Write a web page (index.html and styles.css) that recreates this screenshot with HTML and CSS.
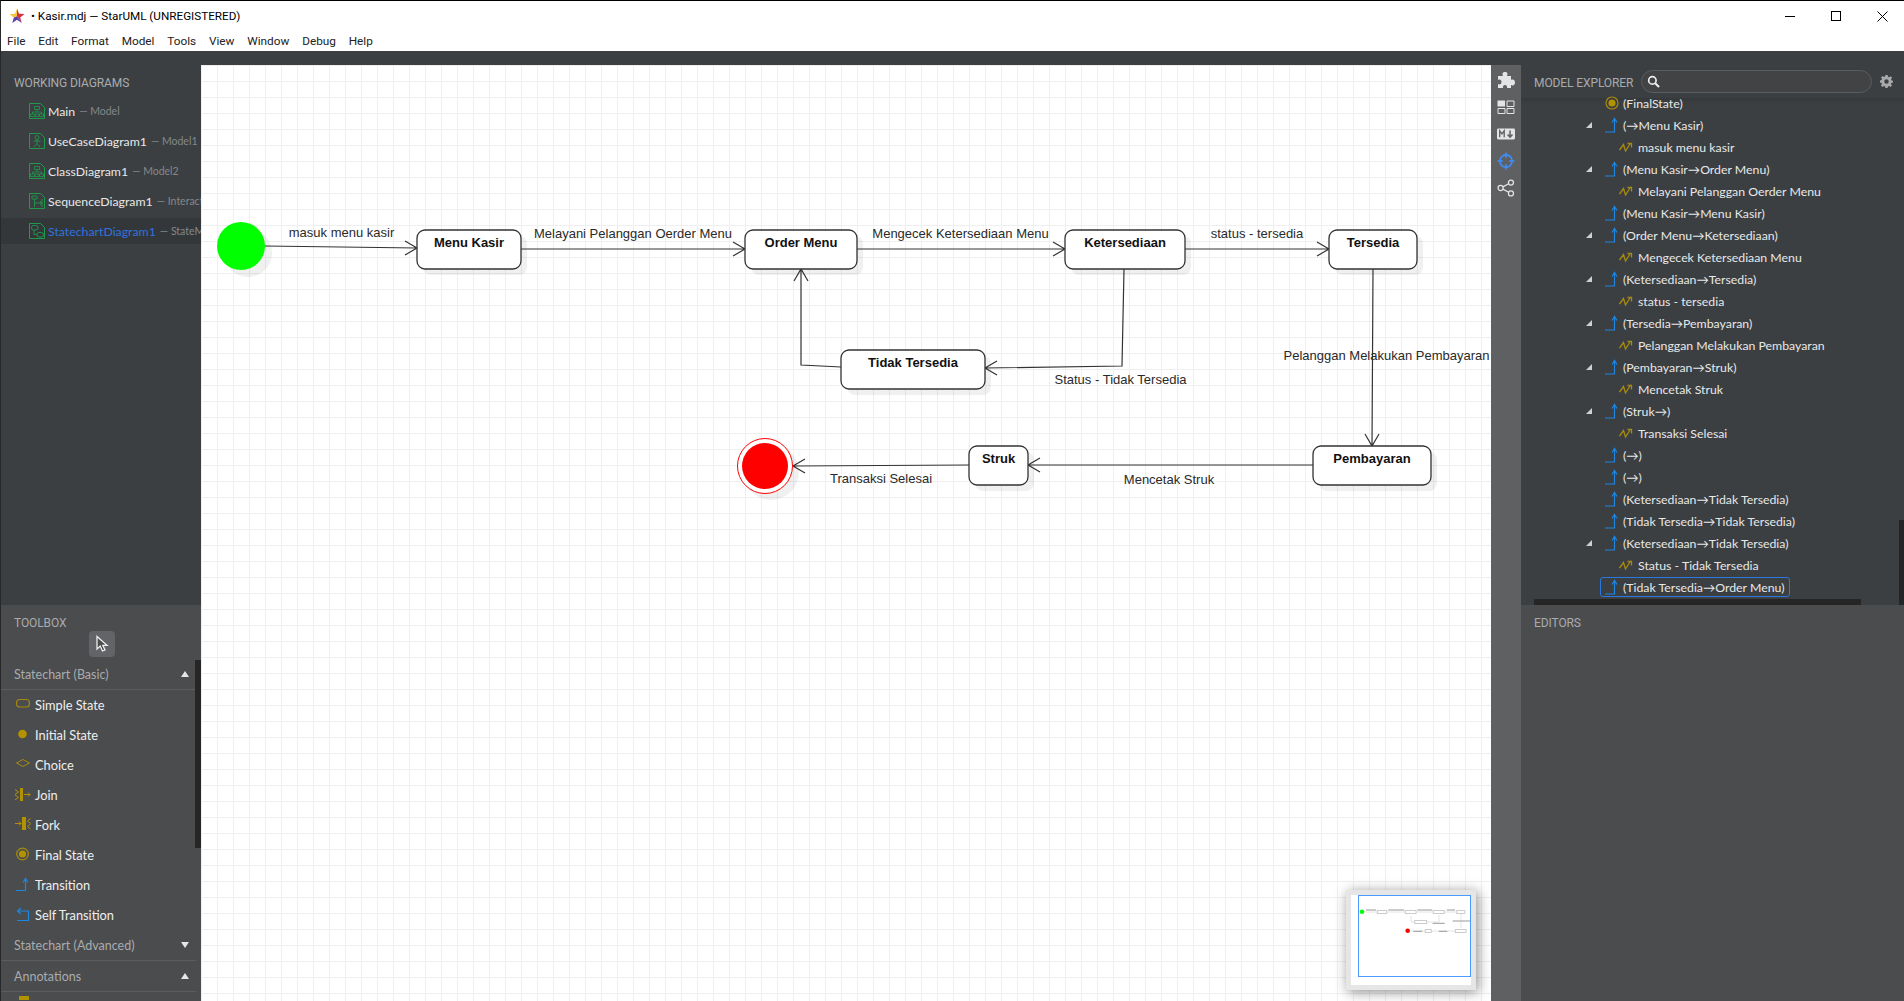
FILE: index.html
```html
<!DOCTYPE html>
<html lang="en">
<head>
<meta charset="utf-8">
<title>Kasir.mdj — StarUML (UNREGISTERED)</title>
<link rel="stylesheet" href="styles.css">
</head>
<body>
<svg class="sprite" aria-hidden="true">
  <symbol id="i-trans" viewBox="0 0 14 16"><path d="M0 15H9.500V2M7 5.500 9.500 1.500 12 5.500" fill="none" stroke="#1c86e0" stroke-width="1.200"/></symbol>
  <symbol id="i-event" viewBox="0 0 14 12"><path d="M.5 9 4.500 3.500 6.500 10 11 3M8.500 2.500H12.500V6.500" fill="none" stroke="#a88a0e" stroke-width="1.300"/></symbol>
  <symbol id="i-final" viewBox="0 0 14 14"><circle cx="7" cy="7" r="6" fill="none" stroke="#a88a0e" stroke-width="1.200"/><circle cx="7" cy="7" r="3.600" fill="#b39200"/></symbol>
  <symbol id="i-page-class" viewBox="0 0 16 16"><path d="M.5.500H11.500L15.500 4.500V15.500H.5Z" fill="none" stroke="#1e9a4c"/><path d="M5.500 3.500H10.500V6.500H5.500ZM8 6.500V9M3.500 11V9H12.500V11M1.500 11H5.500V13.500H1.500ZM6 11H10V13.500H6ZM10.500 11H14.500V13.500H10.500Z" fill="none" stroke="#1e9a4c" stroke-width=".8"/></symbol>
  <symbol id="i-page-usecase" viewBox="0 0 16 16"><path d="M.5.500H11.500L15.500 4.500V15.500H.5Z" fill="none" stroke="#1e9a4c"/><circle cx="8" cy="4.500" r="2" fill="none" stroke="#1e9a4c" stroke-width=".9"/><path d="M8 6.500V10.500M4.500 8H11.500M5 14 8 10.500 11 14" fill="none" stroke="#1e9a4c" stroke-width=".9"/></symbol>
  <symbol id="i-page-seq" viewBox="0 0 16 16"><path d="M.5.500H11.500L15.500 4.500V15.500H.5Z" fill="none" stroke="#1e9a4c"/><path d="M3 3H8V6H3ZM5.500 6V14M5.500 10H13M11 8 13 10 11 12M13 6V14" fill="none" stroke="#1e9a4c" stroke-width=".9"/></symbol>
  <symbol id="i-page-state" viewBox="0 0 16 16"><path d="M.5.500H11.500L15.500 4.500V15.500H.5Z" fill="none" stroke="#1e9a4c"/><rect x="2.500" y="2.500" width="6.500" height="4.500" rx="2" fill="none" stroke="#1e9a4c" stroke-width=".9"/><rect x="8" y="9.500" width="6.500" height="4.500" rx="2" fill="none" stroke="#1e9a4c" stroke-width=".9"/><path d="M5 7V11.500H8" fill="none" stroke="#1e9a4c" stroke-width=".9"/></symbol>
</svg>

<div class="app">
  <header class="titlebar">
    <svg class="app-logo" viewBox="0 0 16 16"><path d="M8 .5 10 5.800 15.500 6 11.200 9.400 12.700 15 8 8Z" fill="#d9303f"/><path d="M8 8 12.700 15 8 11.800 3.300 15 4.800 9.400Z" fill="#5b3fa8"/><path d="M.5 6 6 5.800 8 .5V8L4.800 9.400Z" fill="#f4c63a"/></svg>
    <span class="title-text">• Kasir.mdj — StarUML (UNREGISTERED)</span>
    <div class="win-controls">
      <svg viewBox="0 0 11 11"><path d="M0 5.500H10" stroke="#000"/></svg>
      <svg viewBox="0 0 11 11"><rect x=".5" y=".5" width="9" height="9" fill="none" stroke="#000"/></svg>
      <svg viewBox="0 0 11 11"><path d="M.5.500 10.500 10.500M10.500.500 .5 10.500" stroke="#000" fill="none"/></svg>
    </div>
  </header>
  <nav class="menubar">
    <span>File</span><span>Edit</span><span>Format</span><span>Model</span><span>Tools</span><span>View</span><span>Window</span><span>Debug</span><span>Help</span>
  </nav>

  <main class="workspace">
    <aside class="sidebar">
      <section class="working">
        <h2 class="panel-title">WORKING DIAGRAMS</h2>
        <ul class="diagram-list">
          <li class="diagram"><svg class="diagram-icon"><use href="#i-page-class"/></svg><b>Main</b><i>— Model</i></li>
          <li class="diagram"><svg class="diagram-icon"><use href="#i-page-usecase"/></svg><b>UseCaseDiagram1</b><i>— Model1</i></li>
          <li class="diagram"><svg class="diagram-icon"><use href="#i-page-class"/></svg><b>ClassDiagram1</b><i>— Model2</i></li>
          <li class="diagram"><svg class="diagram-icon"><use href="#i-page-seq"/></svg><b>SequenceDiagram1</b><i>— Interaction1</i></li>
          <li class="diagram active"><svg class="diagram-icon"><use href="#i-page-state"/></svg><b>StatechartDiagram1</b><i>— StateMachine1</i></li>
        </ul>
      </section>
      <section class="toolbox">
        <h2 class="panel-title">TOOLBOX</h2>
        <div class="cursor-row">
          <button class="cursor-btn" type="button"><svg viewBox="0 0 16 18"><path d="M3 1.500V14L6.200 11 8.500 16 11 15 8.800 10.300H13Z" fill="#4b4c4e" stroke="#eee" stroke-width="1.300"/></svg></button>
        </div>
        <div class="tool-group">Statechart (Basic)<span class="tri up"></span></div>
        <ul class="tools">
          <li><svg viewBox="0 0 14 16"><rect x=".6" y="4.500" width="12.800" height="7.500" rx="3" fill="none" stroke="#a88a0e" stroke-width="1.100"/></svg>Simple State</li>
          <li><svg viewBox="0 0 14 16"><circle cx="6.500" cy="9" r="4.300" fill="#b39200"/></svg>Initial State</li>
          <li><svg viewBox="0 0 14 16"><path d="M.5 8 7 4.500 13.500 8 7 11.500Z" fill="none" stroke="#a88a0e"/></svg>Choice</li>
          <li><svg viewBox="0 0 14 16"><path d="M4 3H7V16H4Z" fill="#b39200"/><path d="M-1 4.500 2.500 7-1 9.500M-1 10 2.500 12.500-1 15M8 9.500H14M12 7.500 14 9.500 12 11.500" fill="none" stroke="#b39200"/></svg>Join</li>
          <li><svg viewBox="0 0 14 16"><path d="M6 2H10V15H6Z" fill="#b39200"/><path d="M-1 8.500H5M3 6.500 5 8.500 3 10.500M14.500 3.500 11.500 6 14.500 8.500M14.500 9 11.500 11.500 14.500 14" fill="none" stroke="#b39200"/></svg>Fork</li>
          <li><svg viewBox="0 0 14 16"><circle cx="6.500" cy="9" r="5.800" fill="none" stroke="#a88a0e" stroke-width="1.200"/><circle cx="6.500" cy="9" r="3.600" fill="#b39200"/></svg>Final State</li>
          <li><svg viewBox="0 0 14 16"><path d="M0 15.500H9.500V4M7 7.500 9.500 3.500 12 7.500" fill="none" stroke="#1c86e0" stroke-width="1.200"/></svg>Transition</li>
          <li><svg viewBox="0 0 14 16"><path d="M1 15.500H12.500V6H2M5 3 1.500 6 5 9" fill="none" stroke="#1c86e0" stroke-width="1.200"/></svg>Self Transition</li>
        </ul>
        <div class="tool-group">Statechart (Advanced)<span class="tri down"></span></div>
        <div class="tool-group">Annotations<span class="tri up"></span></div>
        <div class="tool-peek"></div>
        <div class="toolbox-scroll"></div>
      </section>
    </aside>

    <div class="center">
      <div class="canvas">
        <svg class="diagram-svg" viewBox="201 65 1290 935">
          <g class="shadow">
            <circle cx="248" cy="253" r="24"/>
            <rect x="423" y="236" width="104" height="39" rx="8"/>
            <rect x="751" y="236" width="112" height="39" rx="8"/>
            <rect x="1071" y="236" width="120" height="39" rx="8"/>
            <rect x="1335" y="236" width="88" height="39" rx="8"/>
            <rect x="847" y="356" width="144" height="39" rx="8"/>
            <rect x="975" y="452" width="59" height="39" rx="8"/>
            <rect x="1319" y="452" width="118" height="39" rx="8"/>
            <circle cx="771" cy="472" r="28"/>
          </g>
          <g class="edges">
            <path d="M265 246 417 248M405 241 417 248 405 255"/>
            <path d="M521 249H745M733 242 745 249 733 256"/>
            <path d="M857 249H1065M1053 242 1065 249 1053 256"/>
            <path d="M1185 249H1329M1317 242 1329 249 1317 256"/>
            <path d="M1373 269 1372 446M1365 434 1372 446 1379 434"/>
            <path d="M1313 465H1028M1040 458 1028 465 1040 472"/>
            <path d="M969 465 793 466M805 459 793 466 805 473"/>
            <path d="M1124 269 1122 366 985 368M997 361 985 368 997 375"/>
            <path d="M841 367 801 365V269M794 281 801 269 808 281"/>
          </g>
          <g class="nodes">
            <rect x="417" y="230" width="104" height="39" rx="8"/>
            <rect x="745" y="230" width="112" height="39" rx="8"/>
            <rect x="1065" y="230" width="120" height="39" rx="8"/>
            <rect x="1329" y="230" width="88" height="39" rx="8"/>
            <rect x="841" y="350" width="144" height="39" rx="8"/>
            <rect x="969" y="446" width="59" height="39" rx="8"/>
            <rect x="1313" y="446" width="118" height="39" rx="8"/>
          </g>
          <circle class="initial" cx="241" cy="246" r="24"/>
          <circle class="final-ring" cx="765" cy="466" r="27.500"/>
          <circle class="final-dot" cx="765" cy="466" r="23"/>
          <g class="node-text">
            <text x="469" y="247">Menu Kasir</text>
            <text x="801" y="247">Order Menu</text>
            <text x="1125" y="247">Ketersediaan</text>
            <text x="1373" y="247">Tersedia</text>
            <text x="913" y="367">Tidak Tersedia</text>
            <text x="998.500" y="463">Struk</text>
            <text x="1372" y="463">Pembayaran</text>
          </g>
          <g class="edge-text">
            <text x="341.500" y="236.500">masuk menu kasir</text>
            <text x="633" y="237.500">Melayani Pelanggan Oerder Menu</text>
            <text x="960.500" y="237.500">Mengecek Ketersediaan Menu</text>
            <text x="1257" y="237.500">status - tersedia</text>
            <text x="1386.500" y="360">Pelanggan Melakukan Pembayaran</text>
            <text x="1120.500" y="384">Status - Tidak Tersedia</text>
            <text x="881" y="483">Transaksi Selesai</text>
            <text x="1169" y="484">Mencetak Struk</text>
          </g>
        </svg>
        <div class="minimap">
          <svg viewBox="0 0 120 90">
            <g class="mini-soft">
              <path class="mini-lines" d="M13 17H105M60 21V27H64M88 20V27H76M110 19V33M60 36H104"/>
              <path class="mini-labels" d="M15 15H25M37.300 15H53.300M66.300 15H81.300M95.700 15H104M101.700 26H119M81.700 28.300H93.700M62.300 36.300H71.300M87.700 36.300H96.300"/>
              <g class="mini-nodes">
                <rect x="26.300" y="15.500" width="9.400" height="3"/><rect x="54.300" y="15.500" width="10.700" height="3"/><rect x="82.300" y="15.500" width="11" height="3"/><rect x="105.700" y="15.500" width="8" height="3"/><rect x="63.700" y="25.500" width="12" height="3"/><rect x="74.300" y="34.500" width="6" height="3"/><rect x="104.300" y="34.500" width="10.700" height="3"/>
              </g>
              <circle class="mini-start" cx="11" cy="16.700" r="2.300"/>
              <circle class="mini-end" cx="56.700" cy="35.700" r="2.300"/>
            </g>
            <rect class="mini-view" x="7.500" y=".5" width="112" height="81"/>
          </svg>
        </div>
      </div>
    </div>

    <div class="toolstrip">
      <svg viewBox="0 0 18 18"><path d="M1 5H6C5 3 5.500 1 8 1S11 3 10 5H14V9C16 8 18 9 18 11.500S16 15 14 14V17H10C10.500 15.500 9.500 14 8 14S5.500 15.500 6 17H1V13C3 14 4.500 13 4.500 11S3 8 1 9Z" fill="#e4e4e4"/></svg>
      <svg viewBox="0 0 18 18"><path d="M.5 2.500H8V8.500H.5Z" fill="#e4e4e4"/><path d="M10 3H17V8.500H10ZM1 10.500H8V15.500H1ZM10 10.500H17V15.500H10Z" fill="none" stroke="#e4e4e4"/></svg>
      <svg viewBox="0 0 20 14"><rect width="20" height="12" y="1" rx="1.500" fill="#e4e4e4"/><path d="M3 10.500V3.500L5.500 6.800 8 3.500V10.500" fill="none" stroke="#5f6062" stroke-width="1.500"/><path d="M14.500 3V10M11.800 7.500 14.500 10.500 17.200 7.500" fill="none" stroke="#5f6062" stroke-width="1.700"/></svg>
      <svg viewBox="0 0 20 20"><circle cx="10" cy="10" r="6.800" fill="none" stroke="#3e8ef7" stroke-width="1.800"/><path d="M10 .5V6.500M10 13.500V19.500M.5 10H6.500M13.500 10H19.500" stroke="#3e8ef7" stroke-width="1.800"/></svg>
      <svg viewBox="0 0 20 20"><circle cx="15.500" cy="4" r="2.800" fill="none" stroke="#e4e4e4" stroke-width="1.400"/><circle cx="15.500" cy="16" r="2.800" fill="none" stroke="#e4e4e4" stroke-width="1.400"/><circle cx="4" cy="10" r="2.800" fill="none" stroke="#e4e4e4" stroke-width="1.400"/><path d="M6.500 8.700 13 5.300M6.500 11.300 13 14.700" stroke="#e4e4e4" stroke-width="1.400"/></svg>
    </div>

    <aside class="right">
      <section class="explorer">
        <div class="explorer-head">
          <h2 class="panel-title">MODEL EXPLORER</h2>
          <div class="search"><svg viewBox="0 0 14 14"><circle cx="5.800" cy="5.800" r="4" fill="none" stroke="#eee" stroke-width="1.800"/><path d="M8.800 8.800 13 13" stroke="#eee" stroke-width="2.200"/></svg></div>
          <svg class="gear" viewBox="0 0 14 14"><path d="M5.800 0H8.200L8.600 1.900 9.900 2.400 11.500 1.300 13 3 11.900 4.500 12.400 5.800 14 6.100V8.200L12.300 8.500 11.800 9.800 12.900 11.400 11.300 13 9.800 11.900 8.500 12.400 8.200 14H5.800L5.500 12.300 4.200 11.800 2.600 12.900 1 11.300 2.100 9.800 1.600 8.500 0 8.200V5.800L1.700 5.500 2.200 4.200 1.100 2.600 2.700 1 4.200 2.100 5.500 1.600ZM7 4.600A2.400 2.400 0 1 0 7 9.400 2.400 2.400 0 1 0 7 4.600Z" fill="#a9a9a9" fill-rule="evenodd"/></svg>
        </div>
        <ul class="tree">
          <li class="row"><svg class="n-icon final"><use href="#i-final"/></svg>(FinalState)</li>
          <li class="row open"><svg class="n-icon"><use href="#i-trans"/></svg>(→Menu Kasir)</li>
          <li class="row child"><svg class="n-icon"><use href="#i-event"/></svg>masuk menu kasir</li>
          <li class="row open"><svg class="n-icon"><use href="#i-trans"/></svg>(Menu Kasir→Order Menu)</li>
          <li class="row child"><svg class="n-icon"><use href="#i-event"/></svg>Melayani Pelanggan Oerder Menu</li>
          <li class="row"><svg class="n-icon"><use href="#i-trans"/></svg>(Menu Kasir→Menu Kasir)</li>
          <li class="row open"><svg class="n-icon"><use href="#i-trans"/></svg>(Order Menu→Ketersediaan)</li>
          <li class="row child"><svg class="n-icon"><use href="#i-event"/></svg>Mengecek Ketersediaan Menu</li>
          <li class="row open"><svg class="n-icon"><use href="#i-trans"/></svg>(Ketersediaan→Tersedia)</li>
          <li class="row child"><svg class="n-icon"><use href="#i-event"/></svg>status - tersedia</li>
          <li class="row open"><svg class="n-icon"><use href="#i-trans"/></svg>(Tersedia→Pembayaran)</li>
          <li class="row child"><svg class="n-icon"><use href="#i-event"/></svg>Pelanggan Melakukan Pembayaran</li>
          <li class="row open"><svg class="n-icon"><use href="#i-trans"/></svg>(Pembayaran→Struk)</li>
          <li class="row child"><svg class="n-icon"><use href="#i-event"/></svg>Mencetak Struk</li>
          <li class="row open"><svg class="n-icon"><use href="#i-trans"/></svg>(Struk→)</li>
          <li class="row child"><svg class="n-icon"><use href="#i-event"/></svg>Transaksi Selesai</li>
          <li class="row"><svg class="n-icon"><use href="#i-trans"/></svg>(→)</li>
          <li class="row"><svg class="n-icon"><use href="#i-trans"/></svg>(→)</li>
          <li class="row"><svg class="n-icon"><use href="#i-trans"/></svg>(Ketersediaan→Tidak Tersedia)</li>
          <li class="row"><svg class="n-icon"><use href="#i-trans"/></svg>(Tidak Tersedia→Tidak Tersedia)</li>
          <li class="row open"><svg class="n-icon"><use href="#i-trans"/></svg>(Ketersediaan→Tidak Tersedia)</li>
          <li class="row child"><svg class="n-icon"><use href="#i-event"/></svg>Status - Tidak Tersedia</li>
          <li class="row"><span class="selected"><svg class="n-icon"><use href="#i-trans"/></svg>(Tidak Tersedia→Order Menu)</span></li>
        </ul>
        <div class="h-scroll"></div>
        <div class="v-scroll"></div>
      </section>
      <section class="editors">
        <h2 class="panel-title">EDITORS</h2>
      </section>
    </aside>
  </main>
</div>
</body>
</html>
```
FILE: styles.css
```css
* { box-sizing: border-box; }
html, body { margin: 0; height: 100%; overflow: hidden; }
body { font-family: Lato, "Noto Sans", sans-serif; background: #3b3f42; }
ul { list-style: none; margin: 0; padding: 0; }
.sprite { position: absolute; width: 0; height: 0; }

.app { height: 1001px; display: flex; flex-direction: column; border-top: 1px solid #000; border-left: 1px solid #26282a; }

.titlebar { height: 30px; flex: none; background: #fff; display: flex; align-items: center; font-family: Roboto, sans-serif; font-size: 11.700px; color: #000; padding-left: 8px; }
.app-logo { width: 16px; height: 16px; margin-right: 6px; }
.win-controls { margin-left: auto; display: flex; align-items: center; padding-right: 16px; gap: 35px; }
.win-controls svg { width: 11px; height: 11px; }

.menubar { height: 20px; flex: none; background: #fff; display: flex; align-items: center; font-family: Roboto, sans-serif; font-size: 11.800px; color: #222; padding-left: 6px; gap: 12.800px; }

.workspace { flex: 1; min-height: 0; display: flex; }

.sidebar { width: 200px; flex: none; display: flex; flex-direction: column; }
.panel-title { margin: 0; font-family: Roboto, sans-serif; font-size: 12px; letter-spacing: -.1px; font-weight: 400; color: #a9abad; line-height: 16px; white-space: nowrap; flex: none; }

.working { height: 554px; flex: none; padding-top: 24px; overflow: hidden; }
.working .panel-title { padding-left: 13px; }
.diagram-list { margin-top: 5px; }
.diagram { height: 30px; display: flex; align-items: center; padding-left: 28px; white-space: nowrap; font-size: 12.300px; color: #e8e8e8; overflow: hidden; }
.diagram b { font-weight: 400; margin-left: 3px; }
.diagram i { font-style: normal; font-size: 10.500px; color: #84888b; margin-left: 4px; }
.diagram.active { background: #33373a; height: 26px; margin-top: 2px; }
.diagram.active b { color: #2f72de; }
.diagram-icon { width: 16px; height: 16px; flex: none; }

.toolbox { flex: 1; min-height: 0; background: #4b4c4e; position: relative; padding-top: 10px; overflow: hidden; }
.toolbox .panel-title { padding-left: 13px; }
.cursor-row { display: flex; justify-content: center; margin-bottom: 2px; }
.cursor-btn { width: 26px; height: 26px; padding: 4px 5px; border: 0; border-radius: 4px; background: #626467; margin-left: 1px; }
.cursor-btn svg { width: 16px; height: 18px; display: block; }
.tool-group { width: 195px; height: 31px; display: flex; align-items: center; justify-content: space-between; padding: 0 7px 0 13px; font-size: 12.500px; color: #a9abad; border-bottom: 1px solid #5c5d5f; }
.tri { width: 0; height: 0; border-left: 4px solid transparent; border-right: 4px solid transparent; }
.tri.up { border-bottom: 6px solid #e6e6e6; }
.tri.down { border-top: 6px solid #e6e6e6; }
.tools li { height: 30px; display: flex; align-items: center; padding-left: 15px; font-size: 12.800px; color: #efefef; }
.tools li svg { width: 14px; height: 16px; margin-right: 5px; flex: none; position: relative; top: -2px; overflow: visible; }
.tool-peek { width: 10px; height: 4px; background: #b39200; margin: 4px 0 0 18px; }
.toolbox-scroll { position: absolute; left: 194px; top: 55px; width: 6px; height: 188px; background: #262626; }

.center { width: 1290px; flex: none; padding-top: 14px; display: flex; flex-direction: column; }
.canvas {
  position: relative; flex: 1; min-height: 0; overflow: hidden; background-color: #fff;
  background-image: linear-gradient(#efefef 1px, transparent 1px), linear-gradient(90deg, #efefef 1px, transparent 1px);
  background-size: 16px 16px;
}
.diagram-svg { display: block; width: 1290px; height: 935px; }
.shadow circle, .shadow rect { fill: #000; fill-opacity: .06; }
.edges path { fill: none; stroke: #333; stroke-width: 1.200; }
.nodes rect { fill: #fff; stroke: #333; stroke-width: 1.300; }
.initial { fill: #0f0; }
.final-ring { fill: #fff; stroke: #f00; stroke-width: 1; }
.final-dot { fill: #f00; }
.node-text text { font: bold 13px "Liberation Sans", Arial, sans-serif; fill: #111; text-anchor: middle; }
.edge-text text { font: 13px "Liberation Sans", Arial, sans-serif; fill: #2a2a2a; text-anchor: middle; }

.minimap { position: absolute; right: 15px; bottom: 11px; width: 130px; height: 100px; border: 5px solid #e6e6e6; background: #fff; box-shadow: 2px 2px 12px rgba(0,0,0,.45); }
.minimap svg { display: block; width: 120px; height: 90px; }
.mini-soft { filter: blur(.4px); }
.mini-lines { fill: none; stroke: #e4e4e4; stroke-width: 1; }
.mini-labels { fill: none; stroke: #999; stroke-width: 1; }
.mini-nodes rect { fill: #fff; stroke: #ccc; stroke-width: 1; }
.mini-start { fill: #0f0; }
.mini-end { fill: #f00; }
.mini-view { fill: none; stroke: #4a9bff; stroke-width: 1; }

.toolstrip { width: 30px; flex: none; margin-top: 14px; background: #5f6062; display: flex; flex-direction: column; align-items: center; padding-top: 6px; gap: 9px; }
.toolstrip svg { width: 18px; height: 18px; }

.right { flex: 1; min-width: 0; display: flex; flex-direction: column; }
.explorer { height: 554px; flex: none; position: relative; overflow: hidden; }
.explorer-head { height: 47px; display: flex; align-items: center; padding: 14px 11px 0 13px; box-shadow: 0 2px 4px rgba(0,0,0,.12); }
.explorer-head .panel-title { margin-top: 2px; }
.search { width: 231px; height: 23px; margin: 0 8px 0 auto; border: 1px solid #5a5d60; border-radius: 12px; background: #424344; display: flex; align-items: center; padding-left: 5px; }
.search svg { width: 13px; height: 13px; }
.gear { width: 13px; height: 13px; flex: none; }
.tree { margin-top: -6px; }
.row { height: 22px; display: flex; align-items: center; padding-left: 84px; font-size: 12.300px; color: #e8e8e8; white-space: nowrap; position: relative; }
.row.child { padding-left: 98px; }
.n-icon { width: 14px; height: 16px; margin-right: 4px; flex: none; }
.row.child .n-icon { height: 12px; margin-right: 5px; }
.row.open::before { content: ""; position: absolute; left: 65px; top: 8px; border-left: 6px solid transparent; border-bottom: 6px solid #d0d0d0; }
.selected { display: flex; align-items: center; height: 20px; margin-left: -5px; padding: 0 4px; border: 1px solid #2a78e0; border-radius: 3px; }
.h-scroll { position: absolute; left: 13px; top: 548px; width: 327px; height: 6px; background: #252525; }
.v-scroll { position: absolute; right: 0; top: 469px; width: 5px; height: 85px; background: #252525; }
.editors { flex: 1; background: #4b4c4e; padding: 10px 13px; }
```
